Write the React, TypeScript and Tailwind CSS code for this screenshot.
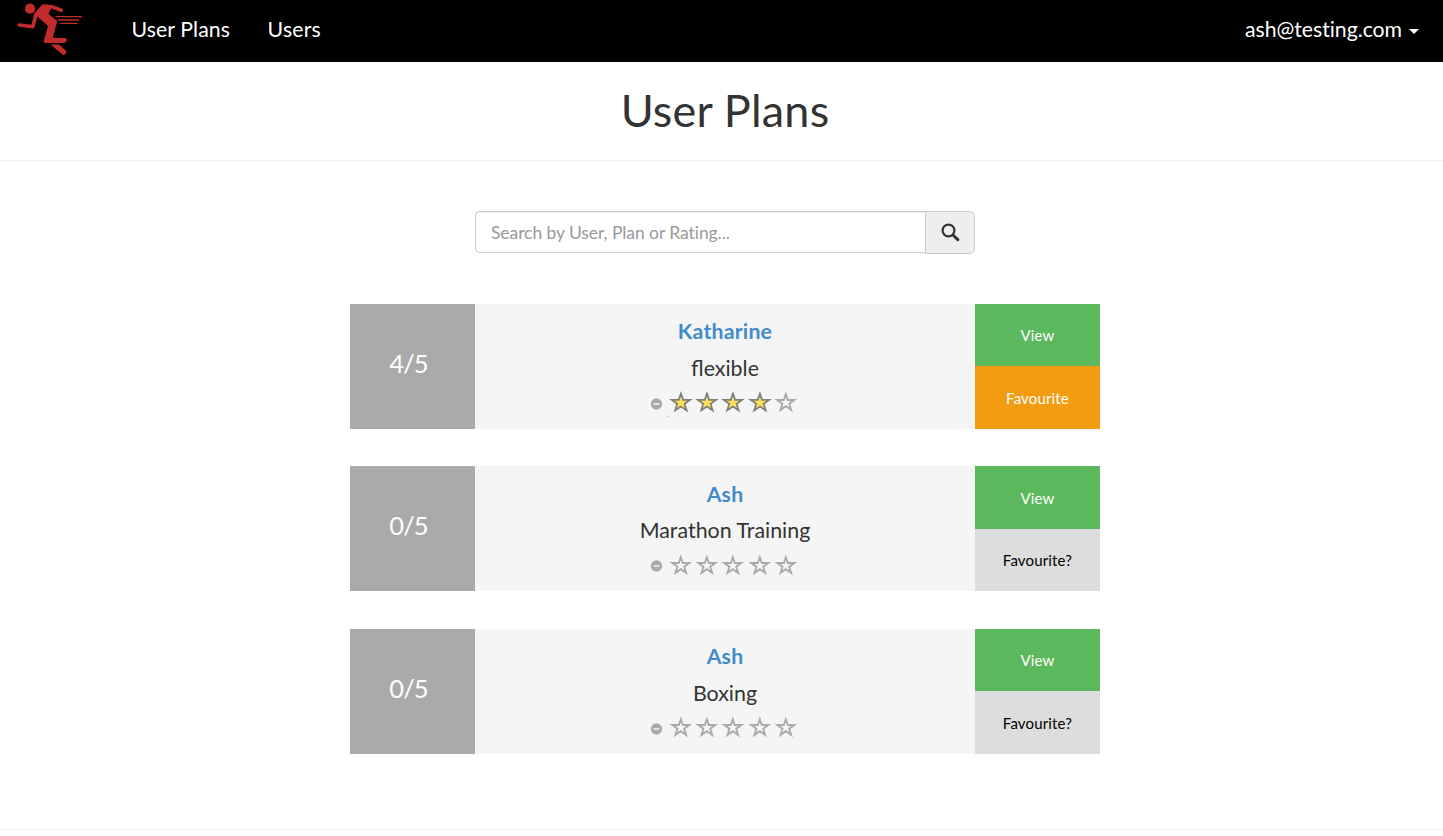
import React from 'react';

type Plan = { user: string; plan: string; rating: number; favourite: boolean };

const plans: Plan[] = [
  { user: 'Katharine', plan: 'flexible', rating: 4, favourite: true },
  { user: 'Ash', plan: 'Marathon Training', rating: 0, favourite: false },
  { user: 'Ash', plan: 'Boxing', rating: 0, favourite: false },
];

function Runner() {
  return (
    <svg className="block h-[62px] w-[100px]" viewBox="0 0 100 62" fill="none" stroke="#c12b2b" strokeLinecap="round" strokeLinejoin="round">
      <circle cx="30" cy="8.7" r="5.1" fill="#c12b2b" stroke="none" />
      <path d="M37 13L44 6L52 6.8L61.2 10.2" strokeWidth="3.6" />
      <path d="M36 14L32.8 26.8L19.2 25" strokeWidth="3.6" />
      <path d="M34.3 14.2L42 4.6L52 6.5L48.5 14L57.3 21L52.8 37.8L65 38.1Q67.2 38.5 66.8 40.5Q66.2 42.8 64 43H44.5Q43.2 42.5 44 40.2L48 26L39 18Z" fill="#c12b2b" stroke="none" />
      <path d="M50.5 44.5L59 44.6L66 50.7Q67 53 65 54.3Q63.6 55.2 62.2 54.2Z" fill="#c12b2b" stroke="none" />
      <path d="M56 16.7H81.5M58.5 20H78.5M60.5 23.3H77" strokeWidth="1.3" />
    </svg>
  );
}

function Star({ filled }: { filled: boolean }) {
  return (
    <svg className="block h-[26px] w-[26.25px]" viewBox="0 0 26 26">
      {filled ? (
        <path
          d="M12.8 4.6L15 10.8H22L16.5 14.9L18.5 21.3L12.8 17.5L7.1 21.3L9.1 14.9L3.6 10.8H10.6Z"
          fill="#ffde5c"
          stroke="#808078"
          strokeWidth="1.8"
        />
      ) : (
        <path
          d="M12.7 5.3L14.7 11H21.2L16.1 14.7L18 20.8L12.7 17.1L7.4 20.8L9.3 14.7L4.2 11H10.7Z"
          fill="none"
          stroke="#aaaaaa"
          strokeWidth="1.9"
        />
      )}
    </svg>
  );
}

function Rating({ value }: { value: number }) {
  return (
    <div className="flex h-[26px] items-center justify-center pr-px">
      <div className="relative mr-[5px] flex h-[26px] w-[13px] items-center">
        <svg className="block h-[13px] w-[13px] translate-y-[1.5px]" viewBox="0 0 13 13">
          <circle cx="6.5" cy="6.5" r="5.7" fill="#aaaaaa" />
          <path d="M3.5 6.5H9.5" stroke="#f5f5f5" strokeWidth="1.4" />
        </svg>
        {value > 0 && <span className="absolute left-[18px] top-[27px] h-px w-px bg-[#aaaaaa]" />}
      </div>
      {[1, 2, 3, 4, 5].map((n) => (
        <Star key={n} filled={n <= value} />
      ))}
    </div>
  );
}

function PlanRow({ user, plan, rating, favourite }: Plan) {
  return (
    <article className="flex h-[125px] w-[750px]">
      <div className="flex w-[125px] shrink-0 items-center justify-center bg-[#aaaaaa] pb-[7px] pr-[8px] text-[25.5px] tracking-[-0.9px] text-white">
        {rating}/5
      </div>
      <div className="flex-1 bg-[#f5f5f5] pt-[12.2px] text-center text-[#333333]">
        <h2 className="text-[21.25px] font-bold leading-[31px] tracking-[0.2px] text-[#428bca]">{user}</h2>
        <p className="mt-[5.8px] text-[21.4px] leading-[30px]">{plan}</p>
        <div className="mt-[6.2px]">
          <Rating value={rating} />
        </div>
      </div>
      <div className="flex w-[125px] shrink-0 flex-col text-[15px] tracking-[0.15px]">
        <button className="flex-1 bg-[#5cb85c] pt-[0.4px] text-white">View</button>
        {favourite ? (
          <button className="flex-1 bg-[#f39c12] pt-[0.4px] text-white">Favourite</button>
        ) : (
          <button className="flex-1 bg-[#dddddd] pt-[0.4px] text-black">Favourite?</button>
        )}
      </div>
    </article>
  );
}

export default function App() {
  return (
    <div className="h-[836px] overflow-hidden bg-white font-['Lato',sans-serif]">
      <nav className="flex h-[62px] items-center bg-black text-[21.25px] text-white">
        <Runner />
        <div className="ml-[31.5px] flex gap-[37.5px] pb-[3px] tracking-[0.1px]">
          <a>User Plans</a>
          <a className="tracking-[0.2px]">Users</a>
        </div>
        <div className="ml-auto flex items-center pb-[3px] pr-[24px]">
          <span className="tracking-[-0.04px]">ash@testing.com</span>
          <span className="ml-[7px] mt-[4px] border-x-[5px] border-t-[5px] border-x-transparent border-t-white" />
        </div>
      </nav>
      <header className="flex h-[99px] items-center justify-center border-b border-[#eeeeee] pb-[2px] pl-[7px]">
        <h1 className="text-[45px] leading-[50px] tracking-[0.2px] text-[#333333]">User Plans</h1>
      </header>
      <main className="flex flex-col items-center pl-[7px]">
        <div className="mt-[50px] flex h-[43px] w-[500px] items-start">
          <input
            className="h-[42px] min-w-0 flex-1 rounded-l-[5px] border border-r-0 border-[#cccccc] bg-white px-[15px] text-[17.5px] tracking-[-0.07px] shadow-[inset_0_1px_1px_rgba(0,0,0,0.075)] outline-none placeholder:text-[#999999]"
            placeholder="Search by User, Plan or Rating..."
          />
          <button className="flex h-[43px] w-[50px] items-center justify-center rounded-r-[5px] border border-[#cccccc] bg-[#eeeeee]">
            <svg className="h-[19px] w-[19px]" viewBox="0 0 19 19" fill="none" stroke="#333333">
              <circle cx="7.5" cy="7.5" r="5.9" strokeWidth="2.2" />
              <path d="M12 12L16.8 16.6" strokeWidth="3" strokeLinecap="round" />
            </svg>
          </button>
        </div>
        <section className="mt-[49.9px] flex flex-col gap-[37.5px]">
          {plans.map((p, i) => (
            <PlanRow key={i} {...p} />
          ))}
        </section>
      </main>
      <hr className="mt-[75.1px] border-t border-[#eeeeee]" />
    </div>
  );
}
